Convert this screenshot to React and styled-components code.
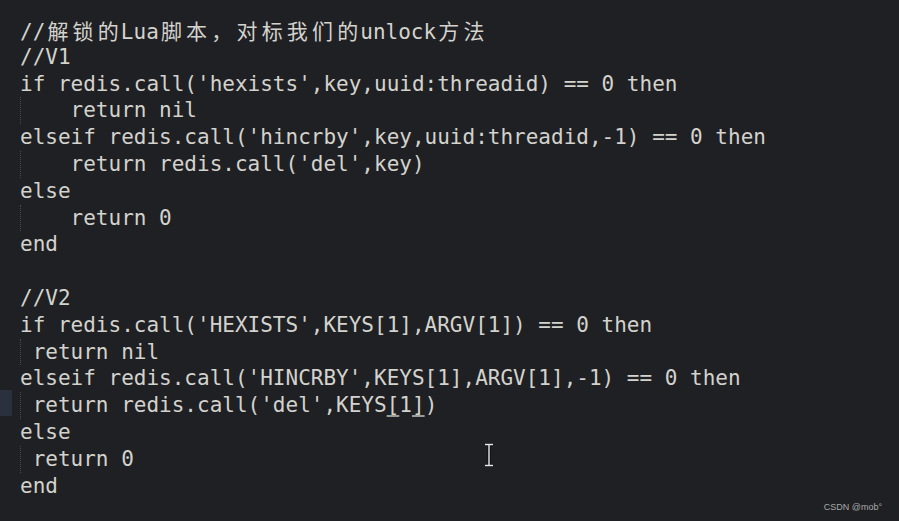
import styled, { createGlobalStyle } from "styled-components";

const GlobalStyle = createGlobalStyle`
  html, body {
    margin: 0;
    padding: 0;
    background: #1f2023;
  }
`;

const LINES = [
  { parts: ["//", { cjk: "解锁的" }, "Lua", { cjk: "脚本，对标我们的" }, "unlock", { cjk: "方法" }] },
  { parts: ["//V1"] },
  { parts: ["if redis.call('hexists',key,uuid:threadid) == 0 then"] },
  { parts: ["    return nil"], guide: true },
  { parts: ["elseif redis.call('hincrby',key,uuid:threadid,-1) == 0 then"] },
  { parts: ["    return redis.call('del',key)"], guide: true },
  { parts: ["else"] },
  { parts: ["    return 0"], guide: true },
  { parts: ["end"] },
  { parts: [""] },
  { parts: ["//V2"] },
  { parts: ["if redis.call('HEXISTS',KEYS[1],ARGV[1]) == 0 then"] },
  { parts: [" return nil"], guide: true },
  { parts: ["elseif redis.call('HINCRBY',KEYS[1],ARGV[1],-1) == 0 then"] },
  {
    parts: [" return redis.call('del',KEYS", { match: "[" }, "1", { match: "]" }, ")"],
    guide: true,
    current: true,
  },
  { parts: ["else"] },
  { parts: [" return 0"], guide: true },
  { parts: ["end"] },
];

function renderPart(p, j) {
  if (typeof p === "string") return <span key={j}>{p}</span>;
  if (p.cjk)
    return [...p.cjk].map((ch, k) => <CjkCell key={`${j}-${k}`}>{ch}</CjkCell>);
  return <Match key={j}>{p.match}</Match>;
}

export default function App() {
  return (
    <>
      <GlobalStyle />
      <Editor>
        <Code>
          {LINES.map((line, i) => (
            <Line key={i} $guide={line.guide} $current={line.current}>
              {line.parts.map(renderPart)}
            </Line>
          ))}
        </Code>
        <Cursor width="14" height="24" viewBox="0 0 14 24">
          <path
            d="M3 1.5h8M3 22.5h8M7 1.5v21"
            stroke="#111"
            strokeWidth="3.4"
            fill="none"
          />
          <path
            d="M3 1.5h8M3 22.5h8M7 1.5v21"
            stroke="#e8e8e8"
            strokeWidth="1.4"
            fill="none"
          />
        </Cursor>
        <Watermark>CSDN @mob°</Watermark>
      </Editor>
    </>
  );
}

const Editor = styled.div`
  position: relative;
  width: 899px;
  height: 521px;
  overflow: hidden;
  background: #1f2023;
`;

const Code = styled.div`
  display: flex;
  flex-direction: column;
  padding-top: 17px;
  font-family: "DejaVu Sans Mono", "Noto Sans CJK SC", monospace;
  font-size: 21px;
  color: #d3d2cd;
`;

const Line = styled.div`
  position: relative;
  height: 26.8px;
  line-height: 26.8px;
  padding-left: 20px;
  white-space: pre;

  &::before {
    content: "";
    display: ${(p) => (p.$guide ? "block" : "none")};
    position: absolute;
    left: 20px;
    top: 0;
    bottom: 0;
    border-left: 1px dotted #4a4b50;
  }

  &::after {
    content: "";
    display: ${(p) => (p.$current ? "block" : "none")};
    position: absolute;
    left: 0;
    top: -2px;
    width: 12px;
    height: 26px;
    background: #2a303d;
  }
`;

const CjkCell = styled.span`
  display: inline-block;
  width: 25.2px;
  height: 26.8px;
  text-align: center;
  font-family: "Noto Sans CJK SC", sans-serif;
  font-size: 21px;
  line-height: 26.8px;
  vertical-align: baseline;
`;

const Match = styled.span`
  text-decoration: underline;
  text-decoration-color: #9a9a96;
  text-underline-offset: 3px;
`;

const Cursor = styled.svg`
  position: absolute;
  left: 482px;
  top: 443px;
`;

const Watermark = styled.div`
  position: absolute;
  right: 17px;
  bottom: 9px;
  font-family: "Liberation Sans", Arial, sans-serif;
  font-size: 9px;
  color: #a9a9a9;
`;
